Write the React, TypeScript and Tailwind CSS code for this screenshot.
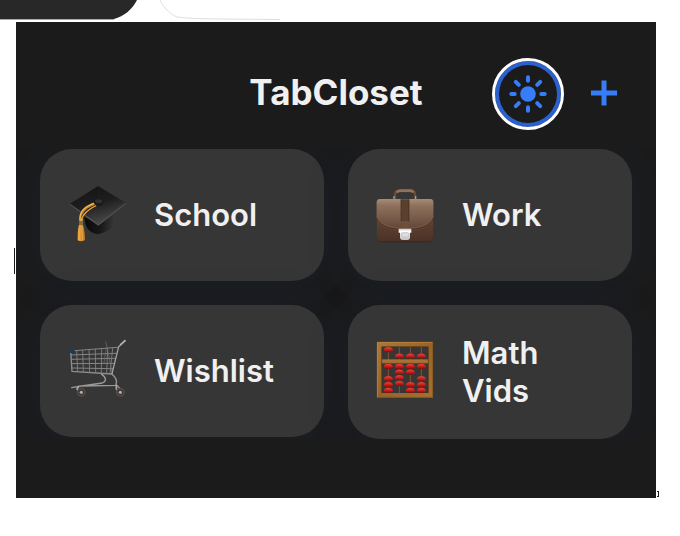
import React from "react";

function GraduationCap() {
  return (
    <svg viewBox="24 21 168 168" className="size-14 shrink-0 overflow-visible" aria-hidden="true">
      <defs>
        <linearGradient id="capBoard" x1="0" y1="0" x2="0.4" y2="1">
          <stop offset="0" stopColor="#121212" />
          <stop offset="0.55" stopColor="#1e1e1e" />
          <stop offset="1" stopColor="#454545" />
        </linearGradient>
        <linearGradient id="capBase" x1="0" y1="0" x2="1" y2="0">
          <stop offset="0" stopColor="#090909" />
          <stop offset="0.55" stopColor="#191919" />
          <stop offset="1" stopColor="#383838" />
        </linearGradient>
        <linearGradient id="tassel" x1="0" y1="0" x2="1" y2="0">
          <stop offset="0" stopColor="#e9a83d" />
          <stop offset="0.5" stopColor="#d99433" />
          <stop offset="1" stopColor="#b87524" />
        </linearGradient>
      </defs>
      <path d="M70 110 C72 140 82 157 107 162 C132 160 157 146 161 122 L160 100 L112 135 Z" fill="url(#capBase)" />
      <path d="M111 18 L194 68 L112 132 L27 71 Z" fill="url(#capBoard)" />
      <path d="M27 71 L112 132 L194 68 L194 71 L112 137 L27 74 Z" fill="#555555" />
      <path d="M107 70 C88 76 60 89 57 118" fill="none" stroke="#bd7c21" strokeWidth="5" />
      <path d="M103 69 C80 76 55 89 57 118" fill="none" stroke="#f2b84d" strokeWidth="4" />
      <path d="M108 75 C90 84 68 96 61 118" fill="none" stroke="#edad40" strokeWidth="4" />
      <ellipse cx="113" cy="67" rx="14" ry="10" fill="#171717" />
      <path d="M101 67 v6 c4 8 20 8 25 0 v-6" fill="#191919" />
      <ellipse cx="113" cy="64" rx="11" ry="6" fill="#303030" />
      <circle cx="60" cy="119" r="6" fill="#dea03c" />
      <rect x="54" y="124" width="12" height="10" rx="2" fill="#786f48" />
      <path d="M54 134 H66 C70 149 72 164 72 180 Q61 187 50 181 C50 164 50 147 54 134 Z" fill="url(#tassel)" />
      <path d="M57 138 L55 180 M63 138 L65 181" stroke="#f0b75a" strokeWidth="1.5" />
    </svg>
  );
}

function Briefcase() {
  return (
    <svg viewBox="21 21 168 168" className="size-14 shrink-0 overflow-visible" aria-hidden="true">
      <defs>
        <linearGradient id="caseFlap" x1="0" y1="0" x2="0" y2="1">
          <stop offset="0" stopColor="#a88c76" />
          <stop offset="0.2" stopColor="#8f725d" />
          <stop offset="1" stopColor="#5f4333" />
        </linearGradient>
        <linearGradient id="caseBody" x1="0" y1="0" x2="0" y2="1">
          <stop offset="0" stopColor="#72533f" />
          <stop offset="1" stopColor="#4b3126" />
        </linearGradient>
        <linearGradient id="caseLock" x1="0" y1="0" x2="0" y2="1">
          <stop offset="0" stopColor="#c9c9c9" />
          <stop offset="0.25" stopColor="#ffffff" />
          <stop offset="1" stopColor="#c2c2c2" />
        </linearGradient>
      </defs>
      <path d="M75 58 V41 Q76 33 87 33 H123 Q134 33 135 41 V58" fill="none" stroke="#684a36" strokeWidth="7" />
      <path d="M80 38 Q83 32 90 32 H122 Q128 32 130 38" fill="none" stroke="#94705a" strokeWidth="8" />
      <path d="M72 49 v7 M137 49 v7" stroke="#b4aaa1" strokeWidth="4" />
      <path d="M28 57 H183 Q190 58 190 66 L189 176 Q188 185 179 185 H31 Q22 185 21 176 L20 66 Q20 58 28 57 Z" fill="url(#caseBody)" />
      <path d="M28 57 H183 Q190 58 190 66 V114 C182 141 151 153 105 153 C59 153 28 141 20 114 V66 Q21 58 28 57 Z" fill="url(#caseFlap)" />
      <path d="M20 112 C28 138 59 149 105 149 C151 149 182 138 190 112" fill="none" stroke="#4a3022" strokeWidth="3" />
      <path d="M20 108 C28 134 59 145 105 145 C151 145 182 134 190 108" fill="none" stroke="#7d5e49" strokeWidth="2" />
      <path d="M92 58 H118 V122 Q118 127 114 127 H96 Q92 127 92 122 Z" fill="#59402f" />
      <path d="M94 59 V123 M116 59 V123" stroke="#4d3628" strokeWidth="3" />
      <rect x="95" y="123" width="20" height="29" fill="#6d4f3a" />
      <path d="M86 146 H124 V158 H120 V173 Q119 180 112 180 H98 Q91 180 90 173 V158 H86 Z" fill="url(#caseLock)" />
      <rect x="94" y="158" width="23" height="13" rx="5" fill="#dedede" stroke="#b5b5b5" strokeWidth="2" />
      <path d="M23 178 Q24 185 31 185 H179 Q187 185 188 178" fill="none" stroke="#38231b" strokeWidth="2" />
    </svg>
  );
}

function ShoppingCart() {
  return (
    <svg viewBox="24 33 168 168" className="size-14 shrink-0 overflow-visible" aria-hidden="true">
      <g fill="none" stroke="#858585" strokeLinecap="round" strokeLinejoin="round">
        <path d="M29 57 L169 46 M30 69 L165 64 M31 82 L161 79 M32 95 L158 94 M33 108 L155 110" strokeWidth="3" />
        <path d="M29 57 L33 118 L152 126" strokeWidth="4" stroke="#8e8e8e" />
        <path d="M47 56 L50 118 M65 55 L67 120 M84 53 L86 121 M103 52 L104 122 M122 50 L121 123 M140 49 L137 124 M155 48 L147 125" strokeWidth="2.5" />
        <path d="M134 29 L139 50 L154 125 M129 92 L136 48" strokeWidth="2" stroke="#747474" />
        <path d="M191 27 L173 44 L153 125" strokeWidth="4" stroke="#a2a2a2" />
        <path d="M192 26 L179 38" strokeWidth="5" stroke="#b0b0b0" />
        <path d="M122 127 C137 137 137 147 124 153 L62 162 L32 167 M153 127 C167 138 169 146 165 157 L178 171 M62 162 L166 160" strokeWidth="4" stroke="#999999" />
        <path d="M53 163 L48 171 L60 181 M166 160 L166 171 L178 181" strokeWidth="5" stroke="#aaa6a2" />
      </g>
      <rect x="27" y="54" width="14" height="9" rx="1" fill="#163c60" />
      <g fill="#373432" stroke="#514b49" strokeWidth="5">
        <circle cx="61" cy="181" r="11" />
        <circle cx="178" cy="181" r="11" />
      </g>
      <circle cx="61" cy="181" r="5" fill="#b3aaa5" />
      <circle cx="178" cy="181" r="5" fill="#b3aaa5" />
    </svg>
  );
}

const beads = [
  [55, 54], [88, 73], [121, 73], [154, 73],
  [55, 104], [55, 141], [55, 159], [55, 176],
  [88, 104], [88, 121], [88, 138], [88, 155],
  [121, 104], [121, 121], [121, 159], [121, 176],
  [154, 104], [154, 141], [154, 159], [154, 176],
];

function Abacus() {
  return (
    <svg viewBox="21 36 168 168" className="size-14 shrink-0 overflow-visible" aria-hidden="true">
      <defs>
        <linearGradient id="bead" x1="0" y1="0" x2="0" y2="1">
          <stop offset="0" stopColor="#e5463a" />
          <stop offset="0.5" stopColor="#c91d19" />
          <stop offset="1" stopColor="#750f0c" />
        </linearGradient>
        <linearGradient id="wood" x1="0" y1="0" x2="1" y2="1">
          <stop offset="0" stopColor="#ad7837" />
          <stop offset="0.5" stopColor="#996324" />
          <stop offset="1" stopColor="#a96f2d" />
        </linearGradient>
      </defs>
      <path fillRule="evenodd" d="M21 30 H189 V197 H21 Z M35 44 V183 H175 V44 Z" fill="url(#wood)" />
      <path d="M55 44 V184 M88 44 V184 M121 44 V184 M154 44 V184" stroke="#865432" strokeWidth="3" />
      <rect x="34" y="82" width="142" height="13" fill="#a77332" />
      <path d="M34 94 H176 M35 44 V183 M36 44 H175 M175 44 V183" stroke="#583817" strokeWidth="2" />
      <path d="M22 31 H188 M22 31 V196" stroke="#c18a45" strokeWidth="2" />
      {beads.map(([x, y]) => (
        <path key={`${x}-${y}`} d={`M${x - 6} ${y - 8} H${x + 6} Q${x + 14} ${y - 4} ${x + 14} ${y} Q${x + 13} ${y + 4} ${x + 6} ${y + 7} H${x - 6} Q${x - 13} ${y + 4} ${x - 14} ${y} Q${x - 14} ${y - 4} ${x - 6} ${y - 8} Z`} fill="url(#bead)" />
      ))}
      <path d="M22 196 H188 V31" fill="none" stroke="#765025" strokeWidth="2" />
    </svg>
  );
}

const closets = [
  { name: "School", Icon: GraduationCap },
  { name: "Work", Icon: Briefcase },
  { name: "Wishlist", Icon: ShoppingCart },
  { name: "Math Vids", Icon: Abacus },
];

export default function App() {
  return (
    <div className="min-h-screen bg-white font-['Inter','Liberation_Sans',sans-serif] text-[#f0f0f0]">
      <div className="h-[22px] overflow-hidden">
        <svg width="680" height="22" aria-hidden="true">
          <path d="M0 0 H137 C132 10 124 16 114 19 H0 Z" fill="#282828" />
          <path d="M0 19.5 H114" stroke="#aaa" />
          <path d="M160 0 C164 8 170 14 177 17 C190 19 220 19 280 19.5" fill="none" stroke="#dedede" />
        </svg>
      </div>

      <main className="relative mr-6 ml-4 bg-[#1b1b1b] pb-[59px]">
        <span className="absolute top-[226px] -left-0.5 h-[26px] w-px bg-[#1b1b1b]" />
        <span className="absolute -right-[3px] bottom-px h-1.5 w-0.5 border border-l-0 border-[#1b1b1b]" />

        <header className="grid h-[127px] grid-cols-[1fr_auto_1fr] items-center px-7 pt-4">
          <h1 className="col-start-2 pb-1 text-[35px] leading-10 font-bold">TabCloset</h1>
          <div className="flex items-center justify-end gap-4">
            <button
              type="button"
              aria-label="Toggle theme"
              className="flex size-[72px] items-center justify-center rounded-full border-[3px] border-white ring-4 ring-[#2b61cf] ring-inset"
            >
              <svg viewBox="0 0 40 40" className="size-10" aria-hidden="true">
                <circle cx="20" cy="20" r="7.8" fill="#377df8" />
                <g stroke="#377df8" strokeWidth="4" strokeLinecap="round">
                  <path d="M20 3.3 V6.7 M20 33.3 V36.7 M3.3 20 H6.7 M33.3 20 H36.7 M7.8 7.8 L10.8 10.8 M29.2 29.2 L32.2 32.2 M7.8 32.2 L10.8 29.2 M29.2 10.8 L32.2 7.8" />
                </g>
              </svg>
            </button>
            <button type="button" aria-label="Add closet" className="flex size-12 items-center justify-center pb-0.5">
              <svg viewBox="0 0 26 26" className="size-[26px]" aria-hidden="true">
                <path d="M13 0.5 V25.5 M0 13 H26" stroke="#377df8" strokeWidth="5" />
              </svg>
            </button>
          </div>
        </header>

        <nav aria-label="Closets" className="grid grid-cols-2 items-start gap-6 overflow-hidden px-6">
          {closets.map(({ name, Icon }) => (
            <button
              key={name}
              type="button"
              className="flex min-h-[132px] items-center gap-[29px] rounded-[32px] bg-[#363636] px-[29px] py-[29px] text-left text-[31px] leading-[38px] font-semibold shadow-[0_4px_40px_4px_#1e3a6420]"
            >
              <Icon />
              <span>{name}</span>
            </button>
          ))}
        </nav>
      </main>
    </div>
  );
}
